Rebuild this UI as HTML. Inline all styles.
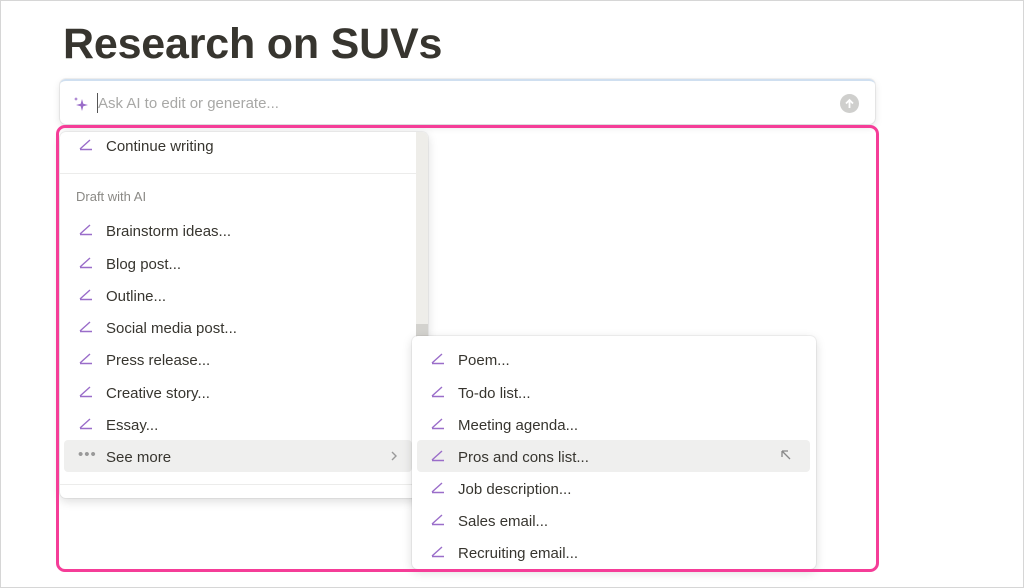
<!DOCTYPE html><html><head><style>
body{margin:0;width:1024px;height:588px;overflow:hidden;background:#fff;font-family:"Liberation Sans",sans-serif;position:relative}
.frame{position:absolute;left:0;top:0;width:1022px;height:586px;border:1px solid #d6d6d6}
h1{position:absolute;left:63px;top:20px;margin:0;font-size:43px;font-weight:bold;color:#37352f;letter-spacing:-0.2px}
.input{position:absolute;left:60px;top:79px;width:815px;height:45px;background:#fff;border-radius:6px;box-shadow:0 0 0 1px rgba(15,15,15,.06),0 3px 8px rgba(15,15,15,.12);border-top:2px solid #cfdff0;box-sizing:border-box}
.input .ph{position:absolute;left:38px;top:14px;font-size:15px;color:#a8a8a6}
.input .cur{position:absolute;left:37px;top:12px;width:1px;height:20px;background:#555}
.input .up{position:absolute;right:16px;top:13px;width:19px;height:19px;border-radius:50%;background:#cfcfcd}
.menu{position:absolute;background:#fff;border-radius:6px;box-shadow:0 0 0 1px rgba(15,15,15,.05),0 3px 10px rgba(15,15,15,.15);overflow:hidden}
.it{position:absolute;left:0;height:32px;line-height:32px;font-size:15px;color:#37352f;white-space:nowrap}
.it svg{position:absolute;left:0;top:8px}
.it span{position:absolute;left:28px;top:2px}
.hl{position:absolute;background:#efefee;border-radius:4px}
.pink{position:absolute;left:56px;top:125px;width:817px;height:441px;border:3px solid #f53d98;border-radius:9px}
</style></head><body>
<div class="frame"></div>
<h1>Research on SUVs</h1>
<div class="input">
<svg style="position:absolute;left:13px;top:15px" width="16" height="16" viewBox="0 0 16 16"><path d="M9 3 L10.3 7.7 L15 9 L10.3 10.3 L9 15 L7.7 10.3 L3 9 L7.7 7.7Z" fill="#9a6dc9"/><path d="M3 1 L3.6 2.4 L5 3 L3.6 3.6 L3 5 L2.4 3.6 L1 3 L2.4 2.4Z" fill="#9a6dc9"/></svg>
<div class="cur"></div><div class="ph">Ask AI to edit or generate...</div>
<div class="up"><svg width="19" height="19" viewBox="0 0 19 19"><path d="M9.5 14V6M6 9.5l3.5-3.5 3.5 3.5" stroke="#fff" stroke-width="1.8" fill="none"/></svg></div>
</div>
<div class="menu" style="left:60px;top:132px;width:368px;height:366px">
<div style="position:absolute;right:0;top:0;width:12px;height:366px;background:#eeede9"></div>
<div style="position:absolute;right:0;top:192px;width:12px;height:20px;background:#d3d2ce"></div>
<div style="position:absolute;left:0;top:41px;width:356px;height:1px;background:#ececeb"></div>
<div style="position:absolute;left:16px;top:57px;font-size:13px;color:#8a8985">Draft with AI</div>
<div class="hl" style="left:4px;top:308px;width:348px;height:32px"></div>
<div style="position:absolute;left:0;top:352px;width:356px;height:1px;background:#ececeb"></div>
<div id="L"></div>
</div>
<div class="menu" style="left:412px;top:336px;width:404px;height:233px">
<div class="hl" style="left:5px;top:104px;width:393px;height:32px"></div>
<svg style="position:absolute;left:368px;top:113px" width="12" height="12" viewBox="0 0 12 12"><path d="M10 10L2 2M2 2v6M2 2h6" stroke="#888" stroke-width="1.3" fill="none"/></svg>
<div id="R"></div>
</div>
<div class="pink"></div>
<script>
var ic='<svg width="16" height="14" viewBox="0 0 16 14"><path d="M2 12L12 3M2 12.5H14" stroke="#9a6dc9" stroke-width="1.4" fill="none"/></svg>';
function add(id,left,top,items){var h='';items.forEach(function(t,i){h+='<div class="it" style="left:'+left+'px;top:'+(top[i])+'px">'+(t[1]?ic:'<span style="position:absolute;left:0;color:#999;letter-spacing:1px;top:-1px">•••</span>')+'<span>'+t[0]+'</span></div>';});document.getElementById(id).innerHTML=h;}
var L=[["Continue writing",1],["Brainstorm ideas...",1],["Blog post...",1],["Outline...",1],["Social media post...",1],["Press release...",1],["Creative story...",1],["Essay...",1],["See more",0]];
var lt=[-3,82,115,147,179,211,244,276,308];
add('L',18,lt,L);
document.getElementById('L').innerHTML+='<svg style="position:absolute;left:330px;top:318px" width="8" height="12" viewBox="0 0 8 12"><path d="M2 2l4 4-4 4" stroke="#999" stroke-width="1.4" fill="none"/></svg>';
var R=[["Poem...",1],["To-do list...",1],["Meeting agenda...",1],["Pros and cons list...",1],["Job description...",1],["Sales email...",1],["Recruiting email...",1]];
add('R',18,[7,40,72,104,136,168,200],R);
</script>
</body></html>
